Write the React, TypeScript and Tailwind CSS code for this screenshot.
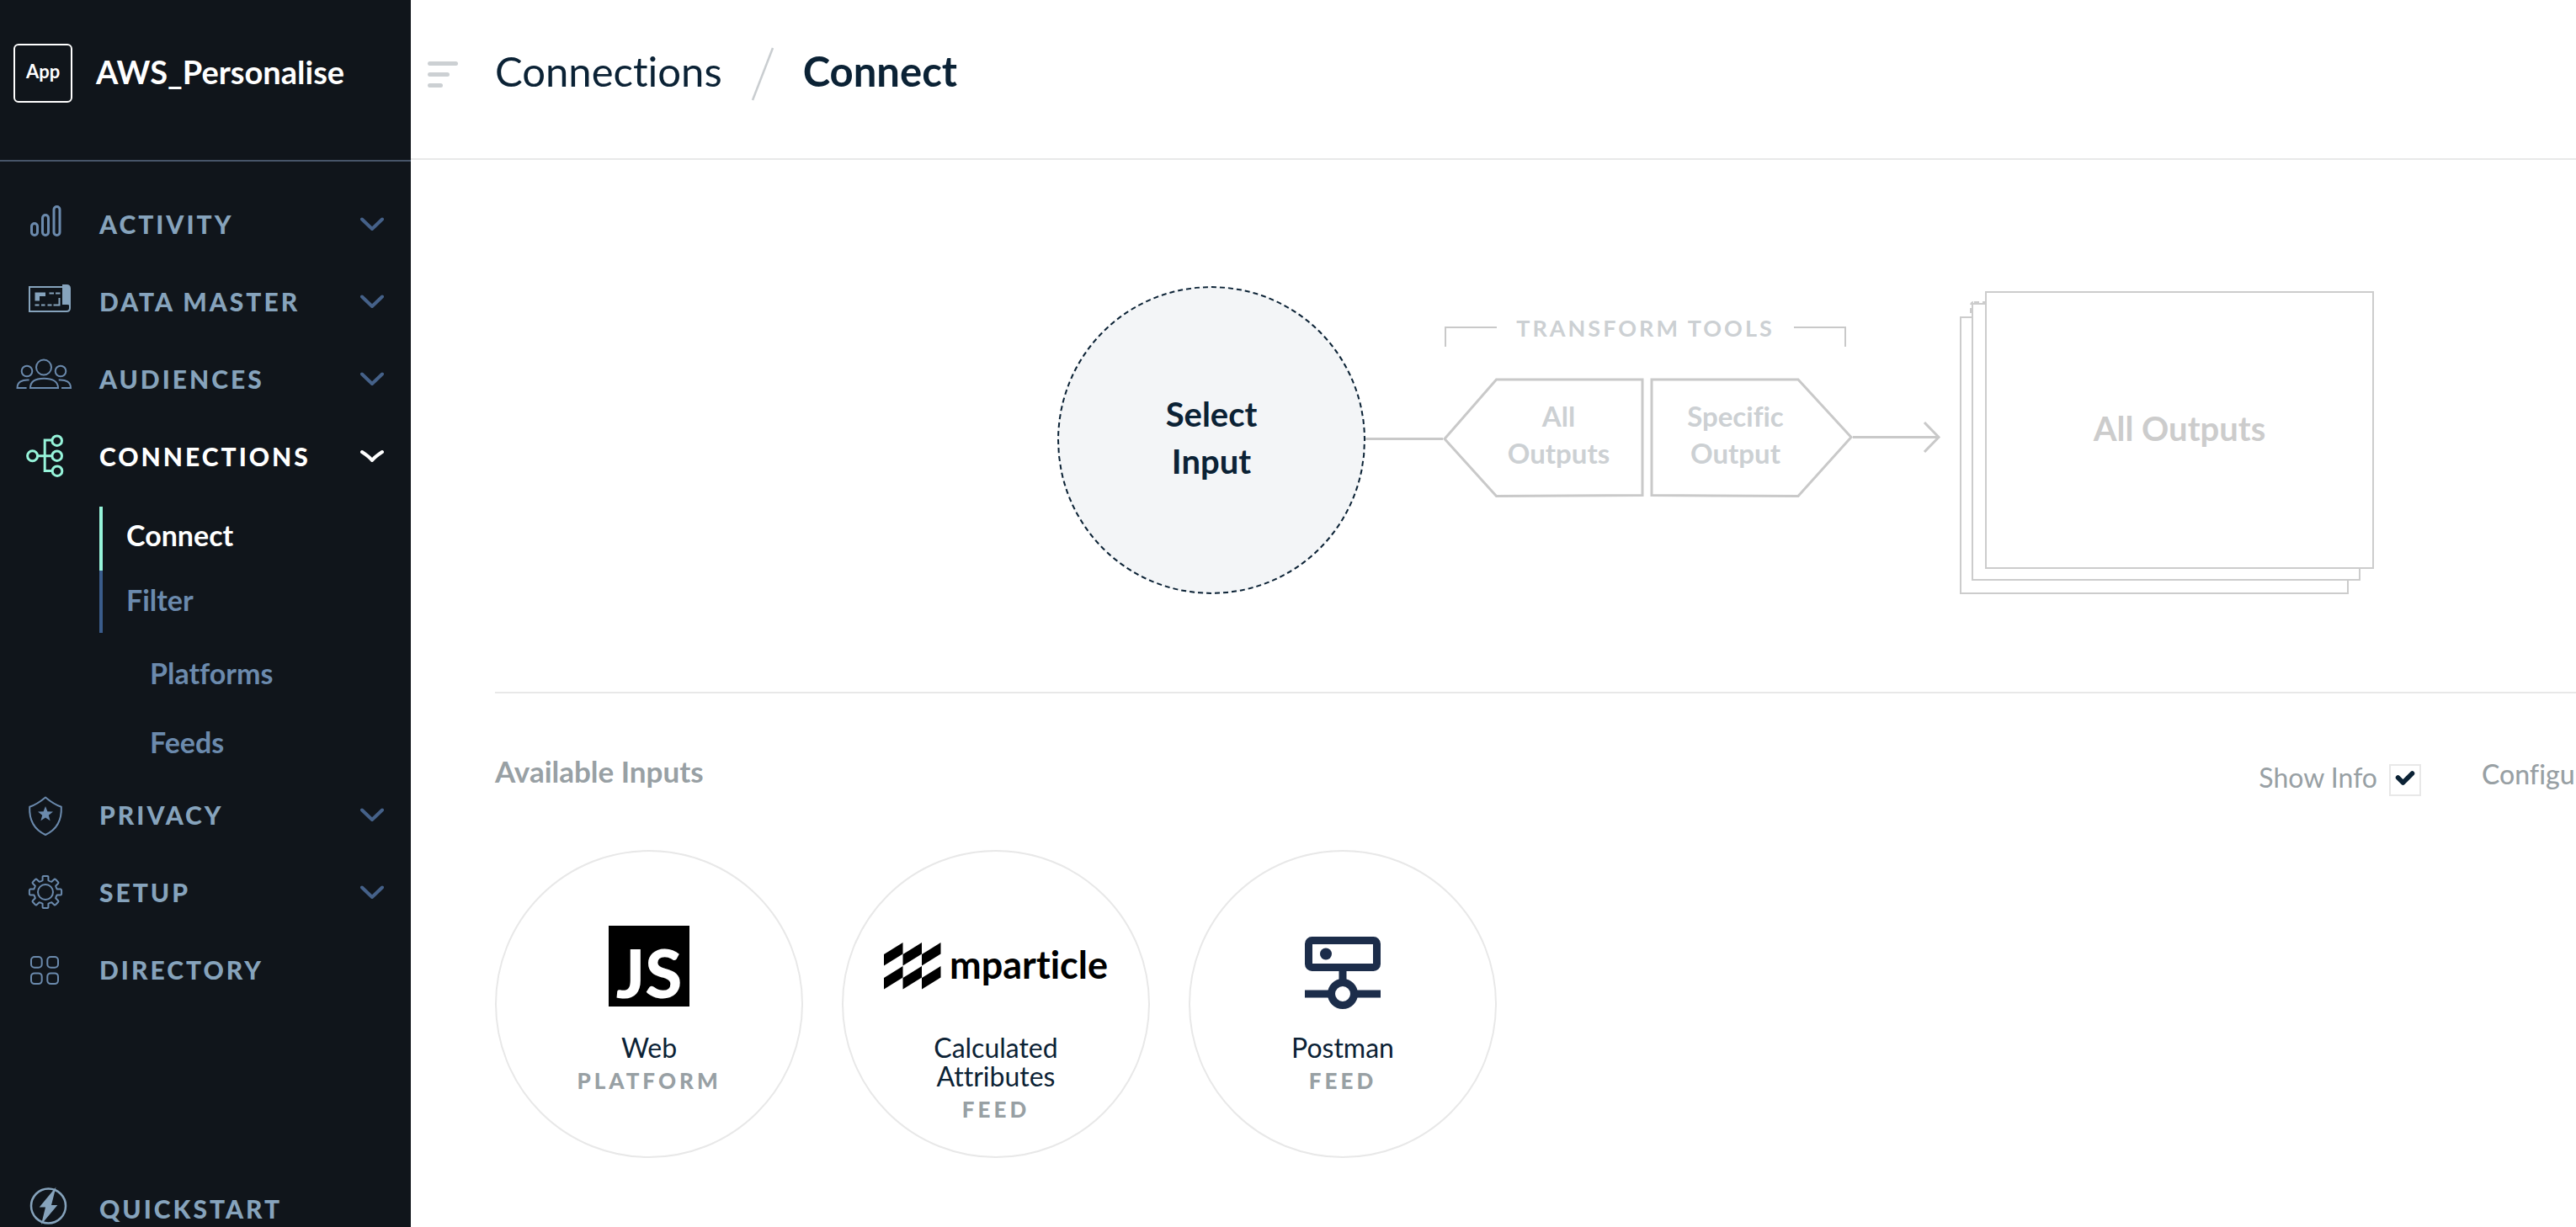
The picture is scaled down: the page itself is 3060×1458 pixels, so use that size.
import { useState, type ReactNode } from "react";

function NavIcon({ children, color }: { children: ReactNode; color: string }) {
  return (
    <svg
      viewBox="0 0 72 60"
      className={`h-[60px] w-[72px] shrink-0 ${color}`}
      fill="none"
      stroke="currentColor"
      strokeWidth={2}
      aria-hidden="true"
    >
      {children}
    </svg>
  );
}

const activityIcon = (
  <g strokeWidth={3}>
    <rect x="21.5" y="29.5" width="7" height="14" rx="3.5" />
    <rect x="34.5" y="19.5" width="7" height="24" rx="3.5" />
    <rect x="48" y="9.5" width="7" height="34" rx="3.5" />
  </g>
);

const dataMasterIcon = (
  <>
    <path d="M59 13H19V42H63Q67 42 67 38V33" />
    <path d="M58 10H63Q68 10 68 15V38Q67 34 64 34H58Z" fill="currentColor" stroke="none" />
    <path d="M25.5 19.5H38V24H31V29.5H25.5Z" fill="currentColor" stroke="none" />
    <path d="M42.5 20.5H48M50 20.5H55.5M25.5 34.5H30.5M33 34.5H37.5M40.5 34.5H45.5M47.5 34.5H54.5V26" />
  </>
);

const audiencesIcon = (
  <>
    <circle cx="36" cy="16.5" r="9" />
    <circle cx="16" cy="21" r="6.3" />
    <circle cx="56" cy="21" r="6.3" />
    <path d="M20 41C20 33 27 29.7 36.3 29.7S53 33 53 41Z" />
    <path d="M18.6 31.6C10 31 4.5 34 4.5 41H15.6" />
    <path d="M53.7 31.6C62.5 31 68 34 68 41H57" />
  </>
);

const connectionsIcon = (
  <g strokeWidth={3}>
    <circle cx="22.6" cy="29.7" r="6" />
    <circle cx="51.7" cy="11.7" r="5.8" />
    <circle cx="51.7" cy="29.7" r="5.8" />
    <circle cx="52" cy="47.7" r="5.8" />
    <path d="M45.5 11H37.2V47.6H46M28.6 29.7H45.7" />
  </g>
);

const privacyIcon = (
  <>
    <path d="M38 9.5C32 14.5 26 18.5 19.2 20.8C18.5 36 25 48 38 54C51 48 57.5 36 56.8 20.8C50 18.5 44 14.5 38 9.5Z" strokeLinejoin="round" />
    <path
      d="M38 20L40.4 26.3L47 26.6L41.8 30.7L43.6 37.2L38 33.5L32.4 37.2L34.2 30.7L29 26.6L35.6 26.3Z"
      fill="currentColor"
      stroke="none"
    />
  </>
);

function gearPath(cx: number, cy: number) {
  const at = (r: number, deg: number) => {
    const a = (deg * Math.PI) / 180;
    return `${(cx + r * Math.cos(a)).toFixed(2)} ${(cy + r * Math.sin(a)).toFixed(2)}`;
  };
  let d = "";
  for (let i = 0; i < 8; i++) {
    const c = i * 45 - 90;
    d += `${i === 0 ? "M" : "L"}${at(14.2, c - 14)}L${at(18.6, c - 10.5)}Q${at(19.4, c - 9)} ${at(19.2, c - 6)}L${at(19.2, c + 6)}Q${at(19.4, c + 9)} ${at(18.6, c + 10.5)}L${at(14.2, c + 14)}`;
    d += `Q${at(13.6, c + 22.5)} ${at(14.2, c + 31)}`;
  }
  return `${d}Z`;
}

const setupIcon = (
  <>
    <path d={gearPath(38, 30)} strokeLinejoin="round" />
    <circle cx="38" cy="30" r="9" />
  </>
);

const directoryIcon = (
  <>
    <rect x="21" y="15" width="12.7" height="12.7" rx="4" />
    <rect x="40.3" y="15" width="12.7" height="12.7" rx="4" />
    <rect x="21" y="34.4" width="12.7" height="12.7" rx="4" />
    <rect x="40.3" y="34.4" width="12.7" height="12.7" rx="4" />
  </>
);

const quickstartIcon = (
  <>
    <circle cx="41.5" cy="27" r="20.5" strokeWidth={2.5} />
    <path d="M50.5 4.5L30.7 28.5H38L33 49L52.3 26H45Z" fill="currentColor" stroke="none" />
  </>
);

function Chevron({ active }: { active?: boolean }) {
  return (
    <svg
      viewBox="0 0 28 17"
      className={`ml-auto h-[17px] w-[28px] ${active ? "text-white" : "text-[#456189]"}`}
      fill="none"
      stroke="currentColor"
      strokeWidth={4}
      strokeLinecap="round"
      strokeLinejoin="round"
      aria-hidden="true"
    >
      <path d={active ? "M2 3Q11 9 14 13Q17 9 26 3" : "M2 2.5L14 14L26 2.5"} />
    </svg>
  );
}

function NavRow({
  icon,
  label,
  active,
  chevron = true,
  bright,
}: {
  icon: ReactNode;
  label: string;
  active?: boolean;
  chevron?: boolean;
  bright?: boolean;
}) {
  return (
    <button type="button" aria-expanded={chevron ? !!active : undefined} className="flex h-[92px] w-full items-center pr-8 pl-4 text-left">
      <NavIcon color={active ? "text-[#96f4da]" : bright ? "text-[#86a3bc]" : "text-[#6b8aad]"}>{icon}</NavIcon>
      <span className={`ml-[30px] text-[30px] leading-9 font-black tracking-[3px] ${active ? "text-white" : "text-[#86a3bc]"}`}>{label}</span>
      {chevron && <Chevron active={active} />}
    </button>
  );
}

function Sidebar() {
  return (
    <aside className="w-[488px] shrink-0 bg-[#10151b]">
      <div className="flex h-[192px] items-center gap-7 border-b-2 border-[#475569] pb-4 pl-4 text-white">
        <div className="flex size-[70px] shrink-0 items-center justify-center rounded-md border-2 border-white pb-1 text-[22px] leading-7 font-bold">
          App
        </div>
        <span className="pb-1 text-[38px] leading-[48px] font-bold">AWS_Personalise</span>
      </div>
      <nav className="pt-7">
        <NavRow icon={activityIcon} label="ACTIVITY" />
        <NavRow icon={dataMasterIcon} label="DATA MASTER" bright />
        <NavRow icon={audiencesIcon} label="AUDIENCES" />
        <NavRow icon={connectionsIcon} label="CONNECTIONS" active />
        <div className="flex flex-col pt-[14px] pl-[118px] text-[34px] leading-10 font-bold text-[#6b8aad]">
          <a href="#connect" className="flex h-[76px] items-center border-l-4 border-[#96f4da] pb-2 pl-7 text-white">Connect</a>
          <a href="#filter" className="flex h-[74px] items-center border-l-4 border-[#3a5c8c] pb-1 pl-7">Filter</a>
          <a href="#platforms" className="mt-1.5 flex h-[84px] items-center pl-[60px]">Platforms</a>
          <a href="#feeds" className="flex h-20 items-center pl-[60px]">Feeds</a>
        </div>
        <NavRow icon={privacyIcon} label="PRIVACY" />
        <NavRow icon={setupIcon} label="SETUP" />
        <NavRow icon={directoryIcon} label="DIRECTORY" chevron={false} />
        <div className="mt-48">
          <NavRow icon={quickstartIcon} label="QUICKSTART" chevron={false} bright />
        </div>
      </nav>
    </aside>
  );
}

function Header() {
  return (
    <header className="flex h-[190px] items-center border-b-2 border-[#e8e9e9] pb-3 pl-5">
      <button type="button" aria-label="Toggle menu" className="flex w-9 flex-col gap-2">
        <span className="h-[5px] w-9 rounded-full bg-[#ccd0d3]" />
        <span className="h-[5px] w-[26px] rounded-full bg-[#ccd0d3]" />
        <span className="h-[5px] w-[18px] rounded-full bg-[#ccd0d3]" />
      </button>
      <nav aria-label="Breadcrumb" className="ml-11 flex items-center text-[49px] leading-[60px]">
        <a href="#connections" className="pb-2">Connections</a>
        <svg viewBox="0 0 28 64" className="mx-[34px] h-16 w-7" fill="none" stroke="#c9cdd0" strokeWidth={2.5} aria-hidden="true">
          <path d="M26 1L2 63" />
        </svg>
        <span className="pb-2 font-bold">Connect</span>
      </nav>
    </header>
  );
}

function ToolShape({ path, className, lines }: { path: string; className: string; lines: [string, string] }) {
  return (
    <button type="button" className="grid h-[142px] w-[241px]">
      <svg viewBox="0 0 241 142" className="col-start-1 row-start-1 h-[142px] w-[241px]" fill="none" stroke="#c9c9c9" strokeWidth={3} aria-hidden="true">
        <path d={path} />
      </svg>
      <span className={`col-start-1 row-start-1 self-center pb-2 text-center text-[33px] leading-[44px] font-bold text-[#ccd0d3] ${className}`}>
        {lines[0]}
        <br />
        {lines[1]}
      </span>
    </button>
  );
}

function Diagram() {
  return (
    <section className="flex items-start justify-center pt-[150px] pb-[116px]">
      <button type="button" className="size-[366px] shrink-0 rounded-full border-2 border-dashed border-[#0b2235] bg-[#f3f5f7] pb-1.5 text-[40px] leading-[56px] font-bold">
        Select
        <br />
        Input
      </button>
      <div className="mt-[180px] h-[3px] w-[92px] bg-[#c9c9c9]" />
      <div className="pt-[34px]">
        <div className="mr-2 ml-[2px] flex h-[38px] items-end justify-between">
          <div className="h-6 w-[62px] border-t-2 border-l-2 border-[#c9c9c9]" />
          <span className="self-start text-[27px] leading-8 font-bold tracking-[3px] text-[#ccd0d3]">TRANSFORM TOOLS</span>
          <div className="h-6 w-[62px] border-t-2 border-r-2 border-[#c9c9c9]" />
        </div>
        <div className="mt-[37px] flex gap-[5px]">
          <ToolShape path="M2 72.5L63.5 2H237V139.5L63.5 140.5Z" className="pl-[34px]" lines={["All", "Outputs"]} />
          <ToolShape path="M2 2H176L239 70.5L176 140.5L2 139.5Z" className="pr-[38px]" lines={["Specific", "Output"]} />
        </div>
      </div>
      <svg viewBox="0 0 105 38" className="mt-[161px] h-[38px] w-[105px]" fill="none" stroke="#c9c9c9" strokeWidth={3} aria-hidden="true">
        <path d="M0 18.5H102M85 1L102 18.5L85 36" />
      </svg>
      <button type="button" className="mt-[6px] ml-[22px] grid h-[360px] w-[492px] shrink-0">
        <span className="col-start-1 row-start-1 h-[330px] w-[462px] self-end border-2 border-[#ccc] bg-white" />
        <span className="col-start-1 row-start-1 mt-[14px] ml-[14px] h-[330px] w-[462px] border-2 border-[#ccc] bg-white" />
        <svg viewBox="0 0 20 18" className="col-start-1 row-start-1 mt-3 ml-3 h-[18px] w-5" fill="none" stroke="#ccc" strokeWidth={2} aria-hidden="true">
          <path d="M1 14V8M1 4Q2 1 4 1M5 1H11M15 1H18" />
        </svg>
        <span className="col-start-1 row-start-1 flex h-[330px] w-[462px] items-center justify-center justify-self-end border-2 border-[#ccc] bg-white pb-1 text-[40px] font-bold text-[#ccc]">
          All Outputs
        </span>
      </button>
    </section>
  );
}

function MparticleLogo() {
  const tiles = [
    [0, 14], [22.5, 14], [45, 14],
    [0, 42], [22.5, 42], [45, 42],
  ];
  return (
    <div className="flex items-center gap-2.5">
      <svg viewBox="0 0 68 56" className="h-14 w-[68px]" fill="#000" aria-hidden="true">
        {tiles.map(([x, y]) => (
          <path key={`${x}-${y}`} d={`M${x} ${y}l22.5 -14v13.5l-22.5 14z`} />
        ))}
      </svg>
      <span className="pb-1 text-[45px] leading-[56px] font-bold text-black">mparticle</span>
    </div>
  );
}

function JsLogo() {
  return (
    <div className="flex size-24 items-end justify-center bg-black text-[80px] leading-[82px] font-black text-white">JS</div>
  );
}

function PostmanLogo() {
  return (
    <svg viewBox="0 0 90 86" className="mt-4 h-[86px] w-[90px]" fill="none" stroke="#1c2d4a" strokeWidth={9} aria-hidden="true">
      <rect x="4.5" y="4.5" width="81" height="32" rx="4" />
      <circle cx="25" cy="20.5" r="7" fill="#1c2d4a" stroke="none" />
      <circle cx="45" cy="68" r="13.5" />
      <path d="M45 36V54.5M0 68H31.5M58.5 68H90" />
    </svg>
  );
}

function InputCard({ logo, name, kind }: { logo: ReactNode; name: string; kind: string }) {
  return (
    <button type="button" className="flex size-[366px] shrink-0 flex-col items-center rounded-full border-2 border-[#e8e8e8] pt-[88px]">
      <span className="flex h-24 items-center justify-center">{logo}</span>
      <span className="mt-8 w-48 text-[32px] leading-[34px]">{name}</span>
      <span className="mt-1 text-[26px] leading-9 font-black tracking-[4px] text-[#98a0a4]">{kind}</span>
    </button>
  );
}

function Inputs() {
  const [showInfo, setShowInfo] = useState(true);
  return (
    <section className="border-t-2 border-[#e8e8e8] pt-[72px]">
      <div className="flex h-[114px] items-start text-[#98a0a4]">
        <h2 className="text-[35px] leading-10 font-bold">Available Inputs</h2>
        <label className="mt-3 ml-auto flex items-center gap-[14px]">
          <span className="pb-1.5 text-[32px] leading-8">Show Info</span>
          <span className="grid size-[38px]">
            <input
              type="checkbox"
              checked={showInfo}
              onChange={(e) => setShowInfo(e.target.checked)}
              className="col-start-1 row-start-1 size-[38px] appearance-none border-2 border-[#e8e8e8] bg-white"
            />
            {showInfo && (
              <svg viewBox="0 0 38 38" className="pointer-events-none col-start-1 row-start-1 size-[38px]" fill="none" stroke="#0b2235" strokeWidth={5.5} strokeLinejoin="round" aria-hidden="true">
                <path d="M10.5 16L16.5 22L27.5 11" strokeLinecap="round" />
              </svg>
            )}
          </span>
        </label>
        <span className="mt-1 ml-[72px] w-[540px] text-[32px] leading-10 font-medium">Configuration</span>
      </div>
      <div className="flex gap-[46px]">
        <InputCard logo={<JsLogo />} name="Web" kind="PLATFORM" />
        <InputCard logo={<MparticleLogo />} name="Calculated Attributes" kind="FEED" />
        <InputCard logo={<PostmanLogo />} name="Postman" kind="FEED" />
      </div>
    </section>
  );
}

export default function App() {
  return (
    <div className="flex h-screen overflow-hidden bg-white font-[Lato,'Open_Sans',sans-serif] text-[#0b2235] [font-variant-ligatures:none]">
      <Sidebar />
      <div className="min-w-0 flex-1 overflow-hidden">
        <Header />
        <main className="ml-[100px] min-w-[2900px]">
          <Diagram />
          <Inputs />
        </main>
      </div>
    </div>
  );
}
